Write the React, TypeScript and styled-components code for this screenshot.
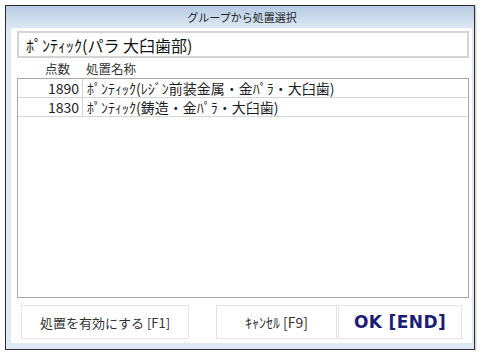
import React from "react";
import styled, { createGlobalStyle } from "styled-components";

const GlobalStyle = createGlobalStyle`
    html, body {
        margin: 0;
        padding: 0;
        background: #ffffff;
    }
    body {
        font-family: "Noto Sans CJK JP", "Noto Sans", sans-serif;
        color: #1e1e1e;
    }
`;

const Page = styled.div`
    padding: 5px 0 0 5px;
`;

const Window = styled.div`
    width: 470px;
    height: 345px;
    box-sizing: border-box;
    border: 1px solid #2e2e2e;
    background: #dfe9f5;
    box-shadow: 1px 1px 2px rgba(0, 0, 0, 0.25);
    display: flex;
    flex-direction: column;
`;

const TitleBar = styled.div`
    height: 22px;
    flex: none;
    display: flex;
    align-items: center;
    justify-content: center;
    background: linear-gradient(#b7cbe2, #dce8f4);
    font-size: 11px;
    color: #222;
    padding-left: 4px;
`;

const Client = styled.div`
    flex: 1;
    margin: 0 2px 6px 5px;
    background: #ffffff;
    padding: 3px 3px 4px 6px;
    display: flex;
    flex-direction: column;
`;

const TextBox = styled.div`
    height: 27px;
    box-sizing: border-box;
    border: 2px solid #d4d4d4;
    padding-left: 7px;
    display: flex;
    align-items: center;
    font-size: 16px;
    color: #111;
`;

const Grid = styled.div`
    display: grid;
    grid-template-columns: 65px 1fr;
`;

const HeaderRow = styled(Grid)`
    height: 19px;
    align-items: end;
    font-size: 12.5px;
    color: #333;
    padding-bottom: 1px;
`;

const HeadCell = styled.div<{ $right?: boolean }>`
    text-align: ${(p) => (p.$right ? "right" : "left")};
    padding: ${(p) => (p.$right ? "0 12px 0 0" : "0 0 0 4px")};
    line-height: 16px;
`;

const ListBox = styled.div`
    flex: 1;
    border: 1px solid #a8a8a8;
    background: #fff;
`;

const Row = styled(Grid)`
    height: 19px;
    box-sizing: border-box;
    border-bottom: 1px solid #d6d6d6;
    font-size: 14px;
    line-height: 18px;
`;

const NumCell = styled.div`
    text-align: right;
    padding-right: 3px;
    border-right: 1px solid #d6d6d6;
`;

const NameCell = styled.div`
    padding-left: 4px;
    white-space: nowrap;
`;

const ButtonBar = styled.div`
    margin-top: 7px;
    height: 34px;
    display: flex;
    padding-left: 4px;
`;

const Button = styled.button<{ $w: number; $gap?: number; $primary?: boolean }>`
    width: ${(p) => p.$w}px;
    height: 34px;
    margin-left: ${(p) => p.$gap ?? 0}px;
    background: #ffffff;
    border: 1px solid #e4e4e4;
    padding: 0;
    font-family: ${(p) =>
        p.$primary ? '"DejaVu Sans", sans-serif' : '"Noto Sans CJK JP", sans-serif'};
    font-size: ${(p) => (p.$primary ? "17px" : "13px")};
    font-weight: ${(p) => (p.$primary ? 700 : 400)};
    letter-spacing: ${(p) => (p.$primary ? "0.4px" : "0")};
    color: ${(p) => (p.$primary ? "#1c1c78" : "#333")};
`;

const CancelLabel = styled.span`
    font-size: 14px;
`;

const rows = [
    { points: "1890", name: "ﾎﾟﾝﾃｨｯｸ(ﾚｼﾞﾝ前装金属・金ﾊﾟﾗ・大臼歯)" },
    { points: "1830", name: "ﾎﾟﾝﾃｨｯｸ(鋳造・金ﾊﾟﾗ・大臼歯)" },
];

const App = () => {
    return (
        <Page>
            <GlobalStyle />
            <Window>
                <TitleBar>グループから処置選択</TitleBar>
                <Client>
                    <TextBox>ﾎﾟﾝﾃｨｯｸ(パラ 大臼歯部)</TextBox>
                    <HeaderRow>
                        <HeadCell $right>点数</HeadCell>
                        <HeadCell>処置名称</HeadCell>
                    </HeaderRow>
                    <ListBox>
                        {rows.map((r) => (
                            <Row key={r.points}>
                                <NumCell>{r.points}</NumCell>
                                <NameCell>{r.name}</NameCell>
                            </Row>
                        ))}
                    </ListBox>
                    <ButtonBar>
                        <Button $w={168}>処置を有効にする [F1]</Button>
                        <Button $w={121} $gap={27}>
                            <CancelLabel>ｷｬﾝｾﾙ [F9]</CancelLabel>
                        </Button>
                        <Button $w={124} $gap={1} $primary>
                            OK [END]
                        </Button>
                    </ButtonBar>
                </Client>
            </Window>
        </Page>
    );
};

export default App;
